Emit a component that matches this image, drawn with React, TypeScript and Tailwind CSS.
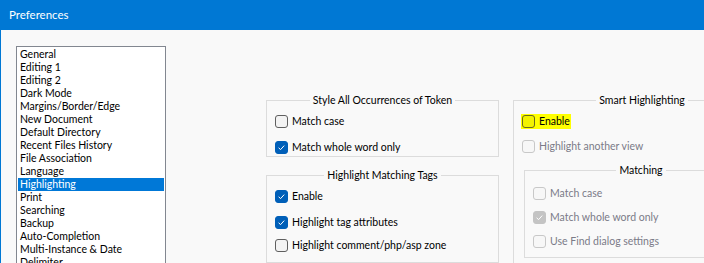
import React from "react";

type CbProps = { label: string; checked?: boolean; disabled?: boolean };

function Box({ checked, disabled, yellow }: { checked?: boolean; disabled?: boolean; yellow?: boolean }) {
  let cls = "w-[13px] h-[13px] rounded-[3px] border shrink-0 flex items-center justify-center ";
  if (yellow) cls += "border-[#6a6a1e] bg-[#f2f200]";
  else if (disabled && checked) cls += "border-[#c4c4c4] bg-[#c4c4c4]";
  else if (disabled) cls += "border-[#c8c8c8] bg-[#f7f7f7]";
  else if (checked) cls += "border-[#005fb8] bg-[#005fb8]";
  else cls += "border-[#5f5f5f] bg-[#f3f3f3]";
  return (
    <div className={cls}>
      {checked && (
        <svg width="11" height="11" viewBox="0 0 11 11">
          <path d="M2.6 5.8 L4.6 7.6 L8.2 3.6" fill="none" stroke="#fff" strokeWidth="1" />
        </svg>
      )}
    </div>
  );
}

function Cb({ label, checked, disabled }: CbProps) {
  return (
    <div className="flex items-center gap-[4px] h-[13px]">
      <Box checked={checked} disabled={disabled} />
      <span className={"leading-[13px] whitespace-nowrap " + (disabled ? "text-[#7b7b88]" : "text-black")}>{label}</span>
    </div>
  );
}

const items = [
  "General",
  "Editing 1",
  "Editing 2",
  "Dark Mode",
  "Margins/Border/Edge",
  "New Document",
  "Default Directory",
  "Recent Files History",
  "File Association",
  "Language",
  "Highlighting",
  "Print",
  "Searching",
  "Backup",
  "Auto-Completion",
  "Multi-Instance & Date",
  "Delimiter",
];

export default function App() {
  return (
    <div className="w-[704px] h-[263px] overflow-hidden bg-[#f9f9f9] flex flex-col font-['Lato',sans-serif] text-[10.5px] text-black">
      <div className="h-[30px] shrink-0 bg-[#0078d4] text-white flex items-center pl-[9px] text-[11.5px]">Preferences</div>
      <div className="flex-1 flex border-l border-[#0078d4] pl-[15px] pt-[16px] overflow-hidden">
        <div className="w-[150px] h-[250px] shrink-0 border border-[#828790] bg-white pt-[1px] px-[1px] overflow-hidden">
          {items.map((it) => (
            <div
              key={it}
              className={
                "h-[13px] leading-[13px] pl-[2px] whitespace-nowrap " +
                (it === "Highlighting" ? "bg-[#0078d7] text-white" : "text-black")
              }
            >
              {it}
            </div>
          ))}
        </div>

        <div className="ml-[100px] mt-[54px] flex flex-col shrink-0">
          <div className="w-[233px] h-[65px] border border-[#dcdcdc] flex flex-col px-[8px]">
            <div className="self-center -mt-[8px] px-[3px] bg-[#f9f9f9] leading-[15px] whitespace-nowrap">Style All Occurrences of Token</div>
            <div className="mt-[7px]"><Cb label="Match case" /></div>
            <div className="mt-[13px]"><Cb label="Match whole word only" checked /></div>
          </div>
          <div className="mt-[18px] w-[233px] h-[100px] border border-[#dcdcdc] flex flex-col px-[8px]">
            <div className="self-center -mt-[8px] px-[3px] bg-[#f9f9f9] leading-[15px] whitespace-nowrap">Highlight Matching Tags</div>
            <div className="mt-[7px]"><Cb label="Enable" checked /></div>
            <div className="mt-[13px]"><Cb label="Highlight tag attributes" checked /></div>
            <div className="mt-[10px]"><Cb label="Highlight comment/php/asp zone" /></div>
          </div>
        </div>

        <div className="ml-[14px] mt-[54px] w-[258px] h-[200px] shrink-0 border border-[#dcdcdc] flex flex-col px-[8px]">
          <div className="self-center -mt-[8px] px-[3px] bg-[#f9f9f9] leading-[15px] whitespace-nowrap">Smart Highlighting</div>
          <div className="mt-[6px] -ml-[1px] self-start flex items-center gap-[4px] bg-[#ffff00] p-[1px]">
            <Box yellow />
            <span className="leading-[13px]">Enable</span>
          </div>
          <div className="mt-[11px]"><Cb label="Highlight another view" disabled /></div>
          <div className="mt-[17px] ml-[2px] w-[234px] h-[88px] shrink-0 border border-[#dcdcdc] flex flex-col px-[8px]">
            <div className="self-center -mt-[8px] px-[3px] bg-[#f9f9f9] leading-[15px] whitespace-nowrap">Matching</div>
            <div className="mt-[9px]"><Cb label="Match case" disabled /></div>
            <div className="mt-[11px]"><Cb label="Match whole word only" disabled checked /></div>
            <div className="mt-[11px]"><Cb label="Use Find dialog settings" disabled /></div>
          </div>
        </div>
      </div>
    </div>
  );
}
